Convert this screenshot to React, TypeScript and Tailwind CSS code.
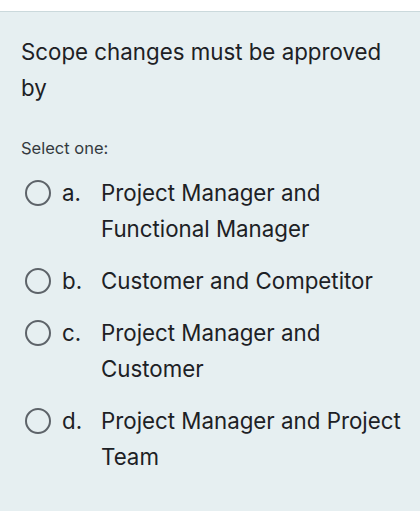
import React, { useState } from 'react';

const options = [
  { key: 'a.', text: 'Project Manager and Functional Manager' },
  { key: 'b.', text: 'Customer and Competitor' },
  { key: 'c.', text: 'Project Manager and Customer' },
  { key: 'd.', text: 'Project Manager and Project Team' },
];

const App: React.FC = () => {
  const [selected, setSelected] = useState<number | null>(null);

  return (
    <div className="w-[420px] h-[511px] bg-white font-['Inter',sans-serif] text-[#1d2125] overflow-hidden">
      <div className="h-[11px] bg-white" />
      <div className="h-[500px] border-t border-[#cbd9dc] bg-[#e6eff1] pl-[21px] pr-[4px] pt-[22px]">
        {/* Question */}
        <p className="text-[22.3px] leading-[36px] pr-5">Scope changes must be approved by</p>

        <p className="mt-[30px] text-[16.5px] leading-6 text-[#343a40]">Select one:</p>

        {/* Answers */}
        <div className="mt-[15px] flex flex-col gap-4">
          {options.map((o, i) => (
            <label key={o.key} className="flex items-start cursor-pointer" onClick={() => setSelected(i)}>
              <span className="w-[41px] h-9 flex items-center pl-[4px] shrink-0">
                <span className="w-[26px] h-[26px] rounded-full border-2 border-[#5d6369] flex items-center justify-center">
                  {selected === i && <span className="w-3 h-3 rounded-full bg-[#0f6cbf]" />}
                </span>
              </span>
              <span className="w-[39px] shrink-0 text-[22.3px] leading-9">{o.key}</span>
              <span className="text-[22.3px] leading-9 pr-[2px]">{o.text}</span>
            </label>
          ))}
        </div>
      </div>
    </div>
  );
};

export default App;
